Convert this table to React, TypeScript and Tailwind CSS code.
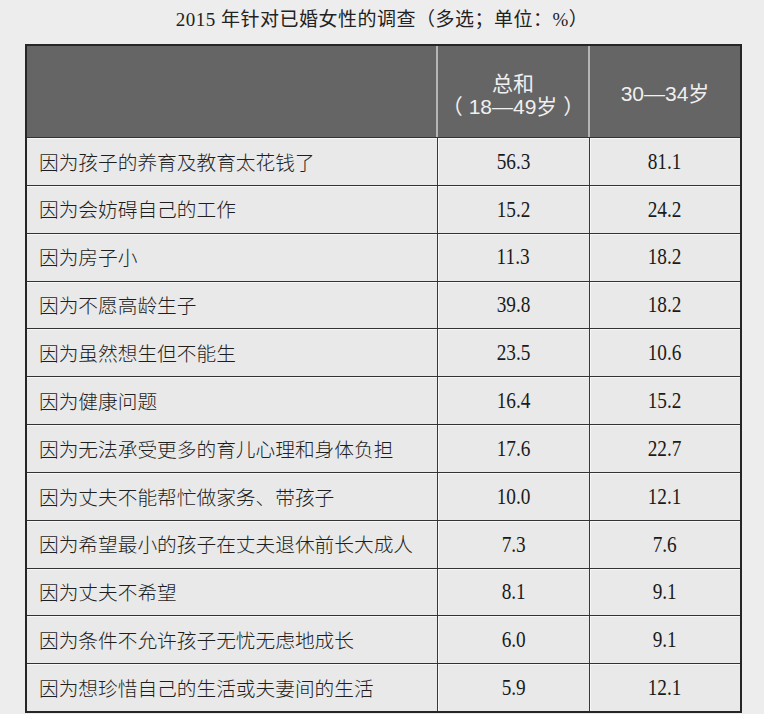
const rows: [string, string, string][] = [
  ["因为孩子的养育及教育太花钱了", "56.3", "81.1"],
  ["因为会妨碍自己的工作", "15.2", "24.2"],
  ["因为房子小", "11.3", "18.2"],
  ["因为不愿高龄生子", "39.8", "18.2"],
  ["因为虽然想生但不能生", "23.5", "10.6"],
  ["因为健康问题", "16.4", "15.2"],
  ["因为无法承受更多的育儿心理和身体负担", "17.6", "22.7"],
  ["因为丈夫不能帮忙做家务、带孩子", "10.0", "12.1"],
  ["因为希望最小的孩子在丈夫退休前长大成人", "7.3", "7.6"],
  ["因为丈夫不希望", "8.1", "9.1"],
  ["因为条件不允许孩子无忧无虑地成长", "6.0", "9.1"],
  ["因为想珍惜自己的生活或夫妻间的生活", "5.9", "12.1"],
]

const sans = "font-['Liberation_Sans','Noto_Sans_CJK_SC',sans-serif]"
const serif = "font-['Liberation_Serif','Noto_Sans_CJK_SC',serif]"

function Num({ value }: { value: string }) {
  return (
    <div className="flex-1 flex items-center justify-center border-l border-[#3a3a3a] shadow-[inset_1px_1px_0_#f7f7f7]">
      <span className={`inline-block ${serif} text-[23.5px] text-[#1a1a1a] scale-x-[0.82]`}>{value}</span>
    </div>
  )
}

export default function App() {
  return (
    <div className="w-[764px] h-[714px] bg-[#ededed] overflow-hidden">
      <div className={`h-[44px] flex items-center justify-center pb-[4px] ${serif} text-[19px] tracking-[0.5px] text-[#222]`}>
        2015 年针对已婚女性的调查（多选；单位：%）
      </div>
      <div className="ml-[25px] w-[717px] border-2 border-[#262626] bg-[#e9e9e9]">
        <div className={`flex h-[91px] bg-[#656565] text-[#f0f0f0] ${sans} text-[21px]`}>
          <div className="w-[409px]" />
          <div className="w-[152px] flex flex-col items-center justify-center pt-[6px] border-l-2 border-[#b5b5b5] leading-[23px]">
            <span>总和</span>
            <span>（ 18—49岁 ）</span>
          </div>
          <div className="flex-1 flex items-center justify-center pt-[4px] border-l-2 border-[#b5b5b5]">30—34岁</div>
        </div>
        {rows.map(([label, a, b]) => (
          <div key={label} className="flex h-[47.85px] border-t border-[#333]">
            <div className="w-[410px] flex items-center pl-[12px] shadow-[inset_0_1px_0_#f7f7f7]">
              <span className="font-['Noto_Sans_CJK_SC',sans-serif] font-light text-[19.7px] text-[#1e1e1e]">
                {label}
              </span>
            </div>
            <div className="w-[152px] flex">
              <Num value={a} />
            </div>
            <Num value={b} />
          </div>
        ))}
      </div>
    </div>
  )
}
